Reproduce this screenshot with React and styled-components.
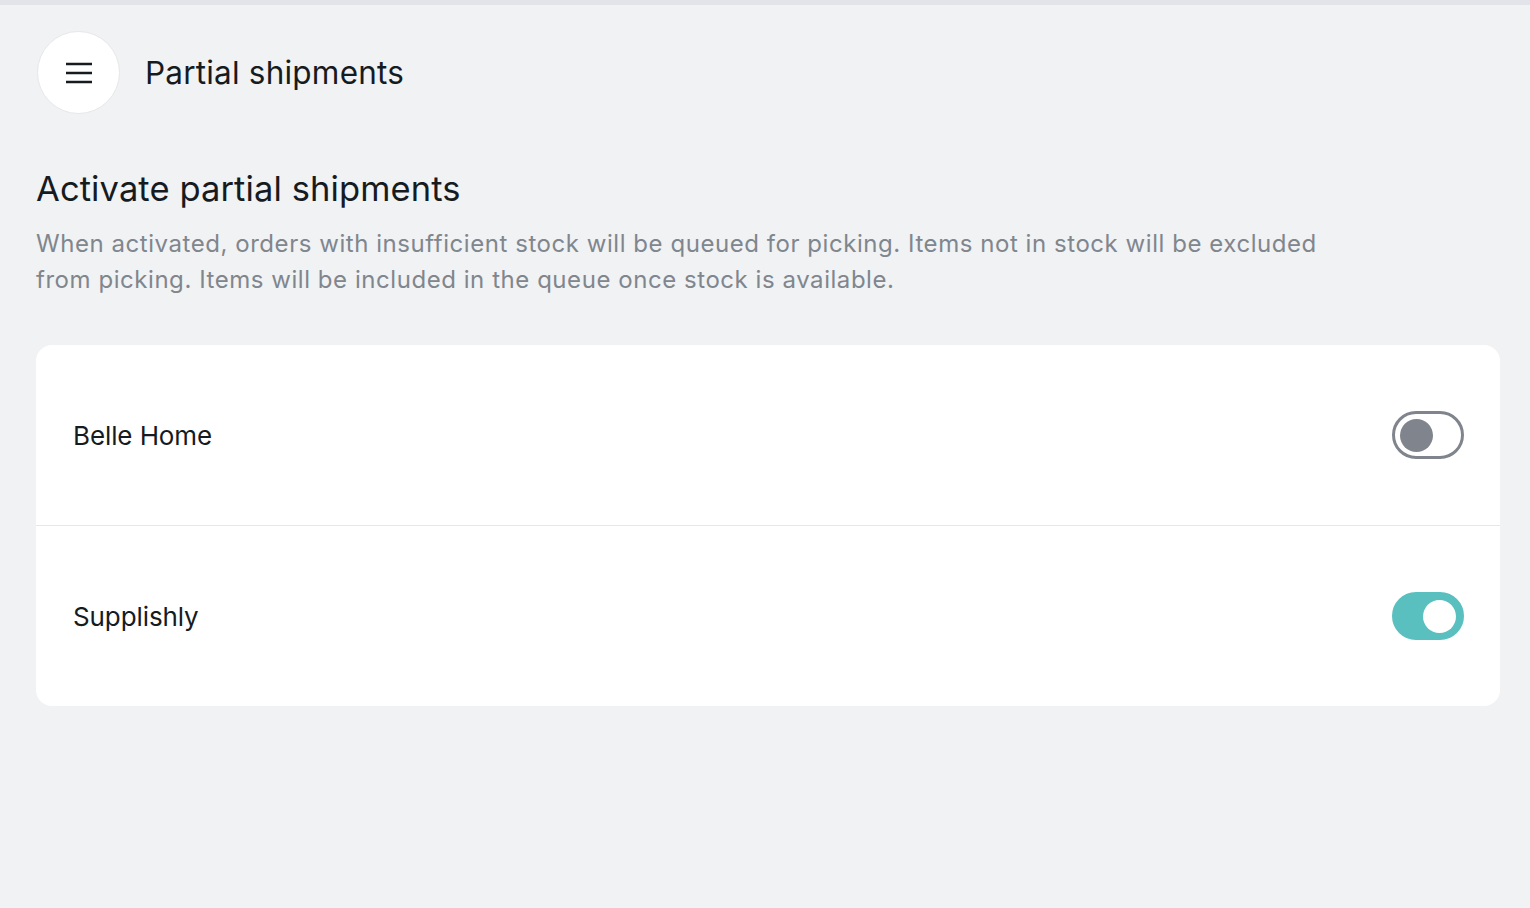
import React, { useState } from 'react'
import styled, { createGlobalStyle } from 'styled-components'

const Global = createGlobalStyle`
  html, body {
    margin: 0;
    padding: 0;
    background: #f1f2f4;
  }
  body {
    font-family: Inter, 'Noto Sans', sans-serif;
    color: #161b1f;
  }
`

const Page = styled.div`
  min-height: 908px;
  box-sizing: border-box;
  border-top: 5px solid #e3e4ea;
  padding: 26px 30px 0 36px;
`

const Header = styled.header`
  display: flex;
  align-items: center;
  gap: 25px;
`

const MenuButton = styled.button`
  width: 83px;
  height: 83px;
  border-radius: 50%;
  border: 1px solid #e6e7ea;
  background: #ffffff;
  display: flex;
  align-items: center;
  justify-content: center;
  padding: 0;
  margin-left: 1px;
`

const PageTitle = styled.h1`
  margin: 0;
  font-size: 31.5px;
  font-weight: 400;
  letter-spacing: 0.2px;
`

const Section = styled.section`
  margin-top: 54px;
`

const Heading = styled.h2`
  margin: 0;
  font-size: 34.5px;
  font-weight: 400;
  letter-spacing: 0.1px;
  line-height: 42px;
`

const Description = styled.p`
  margin: 16px 0 0;
  max-width: 1300px;
  font-size: 24px;
  line-height: 36px;
  color: #80868d;
  letter-spacing: 0.55px;
`

const Card = styled.div`
  margin-top: 47px;
  background: #ffffff;
  border-radius: 16px;
  overflow: hidden;
`

const Row = styled.div`
  height: 180px;
  display: flex;
  align-items: center;
  justify-content: space-between;
  padding: 0 36px 0 37px;
  & + & {
    border-top: 1px solid #e6e7ea;
  }
`

const Label = styled.span`
  font-size: 26px;
  letter-spacing: -0.1px;
`

const Track = styled.button`
  width: 72px;
  height: 48px;
  border-radius: 24px;
  box-sizing: border-box;
  padding: 0 5px;
  display: flex;
  align-items: center;
  justify-content: ${p => (p.$on ? 'flex-end' : 'flex-start')};
  border: 3px solid ${p => (p.$on ? '#5abfbf' : '#80858d')};
  background: ${p => (p.$on ? '#5abfbf' : '#ffffff')};
  cursor: pointer;
`

const Knob = styled.span`
  width: 33px;
  height: 33px;
  border-radius: 50%;
  background: ${p => (p.$on ? '#ffffff' : '#80858d')};
`

const Toggle = ({ initial }) => {
  const [on, setOn] = useState(initial)
  return (
    <Track $on={on} onClick={() => setOn(!on)}>
      <Knob $on={on} />
    </Track>
  )
}

const stores = [
  { name: 'Belle Home', active: false },
  { name: 'Supplishly', active: true },
]

const App = () => {
  return (
    <>
      <Global />
      <Page>
        <Header>
          <MenuButton>
            <svg width="28" height="22" viewBox="0 0 28 22">
              <path d="M1 2h26M1 11h26M1 20h26" stroke="#161b1f" strokeWidth="2.4" />
            </svg>
          </MenuButton>
          <PageTitle>Partial shipments</PageTitle>
        </Header>

        <Section>
          <Heading>Activate partial shipments</Heading>
          <Description>
            When activated, orders with insufficient stock will be queued for picking. Items not in stock will be excluded from picking. Items will be included in the queue once stock is available.
          </Description>

          <Card>
            {stores.map(s => (
              <Row key={s.name}>
                <Label>{s.name}</Label>
                <Toggle initial={s.active} />
              </Row>
            ))}
          </Card>
        </Section>
      </Page>
    </>
  )
}

export default App
